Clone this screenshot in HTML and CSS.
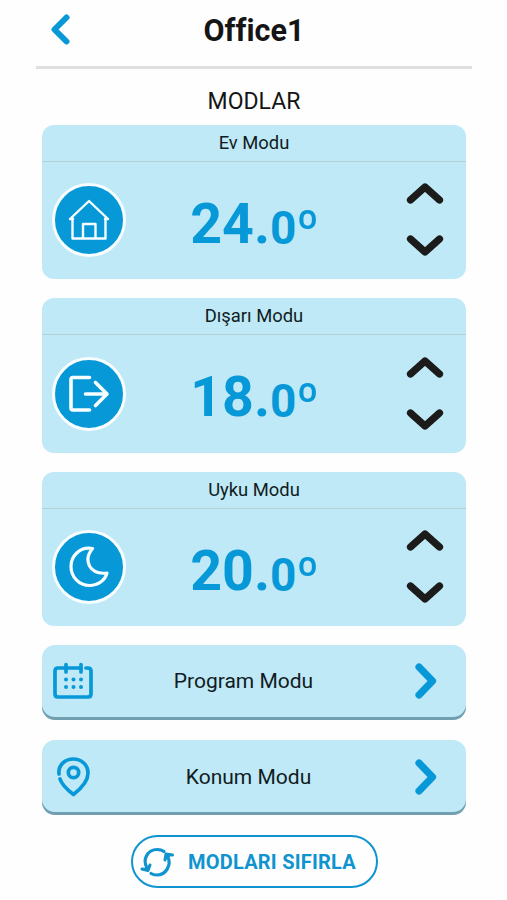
FILE: index.html
```html
<!DOCTYPE html>
<html lang="tr">
<head>
  <meta charset="UTF-8" />
  <meta name="viewport" content="width=device-width, initial-scale=1.0"/>
  <title>Office1</title>
  <link rel="stylesheet" href="styles.css">
</head>
<body>
  <div class="screen">
    <!-- Header -->
    <header class="header">
      <button class="back-btn" aria-label="Geri">
        <svg width="20" height="32" viewBox="0 0 20 32"><path d="M16.5 3.5 L4.5 15.5 L16.5 27.5"/></svg>
      </button>
      <h1>Office1</h1>
    </header>

    <h2 class="section-title">MODLAR</h2>

    <!-- Mode cards -->
    <div class="modes">
      <section class="mode-card">
        <h3>Ev Modu</h3>
        <div class="mode-body">
          <div class="mode-icon">
            <svg width="42" height="42" viewBox="0 0 42 42" stroke-width="2.4">
              <path d="M4.5 19.5 V39.5 H37.5 V19.5"/>
              <path d="M2 20 H5 M37 20 H40 M2 20 L21 2 L40 20"/>
              <path d="M15 39 V25 H27.5 V39"/>
            </svg>
          </div>
          <div class="temp"><span class="whole">24.</span><span class="decimal">0</span><span class="degree">º</span></div>
          <div class="arrows">
            <button aria-label="Artır"><svg width="38" height="24" viewBox="0 0 38 24"><path d="M4.5 18 L19 5 L33.5 18"/></svg></button>
            <button aria-label="Azalt"><svg width="38" height="24" viewBox="0 0 38 24"><path d="M4.5 5 L19 18 L33.5 5"/></svg></button>
          </div>
        </div>
      </section>

      <section class="mode-card">
        <h3>Dışarı Modu</h3>
        <div class="mode-body">
          <div class="mode-icon">
            <svg width="42" height="42" viewBox="0 0 42 42" stroke-width="3.6">
              <path d="M21.5 4.5 H5 Q3 4.5 3 6.5 V35 Q3 37 5 37 H21.5"/>
              <path d="M17.5 21 H39 M27.5 9.5 L39 21 L27.5 32.5"/>
            </svg>
          </div>
          <div class="temp"><span class="whole">18.</span><span class="decimal">0</span><span class="degree">º</span></div>
          <div class="arrows">
            <button aria-label="Artır"><svg width="38" height="24" viewBox="0 0 38 24"><path d="M4.5 18 L19 5 L33.5 18"/></svg></button>
            <button aria-label="Azalt"><svg width="38" height="24" viewBox="0 0 38 24"><path d="M4.5 5 L19 18 L33.5 5"/></svg></button>
          </div>
        </div>
      </section>

      <section class="mode-card">
        <h3>Uyku Modu</h3>
        <div class="mode-body">
          <div class="mode-icon">
            <svg width="42" height="42" viewBox="0 0 42 42" stroke-width="3.2">
              <path d="M24.5 2.5 C11 0.5 3 10.5 3 20.5 C3 31 11 39.5 21.5 39.5 C30 39.5 37 34.5 39 27 C31 28 25 26 21.5 20 C18.5 14 20 8 24.5 2.5 Z"/>
            </svg>
          </div>
          <div class="temp"><span class="whole">20.</span><span class="decimal">0</span><span class="degree">º</span></div>
          <div class="arrows">
            <button aria-label="Artır"><svg width="38" height="24" viewBox="0 0 38 24"><path d="M4.5 18 L19 5 L33.5 18"/></svg></button>
            <button aria-label="Azalt"><svg width="38" height="24" viewBox="0 0 38 24"><path d="M4.5 5 L19 18 L33.5 5"/></svg></button>
          </div>
        </div>
      </section>
    </div>

    <!-- Links -->
    <nav class="links">
      <a class="link-row program" href="#">
        <svg class="link-icon" width="40" height="40" viewBox="0 0 40 40">
          <path d="M28 7 H5 Q2 7 2 10 V33 Q2 36 5 36 H35 Q38 36 38 33 V10 Q38 7 35 7 H33"/>
          <path d="M13 3.5 V11 M28 3.5 V11"/>
          <g class="dots">
            <circle cx="13" cy="18.5" r="2"/><circle cx="20.5" cy="18.5" r="2"/><circle cx="28" cy="18.5" r="2"/>
            <circle cx="13" cy="26" r="2"/><circle cx="20.5" cy="26" r="2"/><circle cx="28" cy="26" r="2"/>
          </g>
        </svg>
        <span>Program Modu</span>
        <svg class="chevron" width="24" height="38" viewBox="0 0 24 38"><path d="M5 5 L18.5 19 L5 33"/></svg>
      </a>
      <a class="link-row location" href="#">
        <svg class="link-icon" width="40" height="40" viewBox="0 0 40 40">
          <path d="M6 17 C5 8 12 2 20.5 2 C28.5 2 35 8 35 16 C35 25 27.5 32 20.5 37.5 C14.5 33 9 28 7 22"/>
          <circle cx="20.5" cy="15.5" r="5.2"/>
        </svg>
        <span>Konum Modu</span>
        <svg class="chevron" width="24" height="38" viewBox="0 0 24 38"><path d="M5 5 L18.5 19 L5 33"/></svg>
      </a>
    </nav>

    <!-- Reset -->
    <button class="reset-btn">
      <svg width="36" height="32" viewBox="0 0 36 32">
        <path d="M7 22 C2 13 8 3.5 17 3.5 C20 3.5 22 4 24 5.5"/>
        <path d="M27.500 10 C32 19 26 29 17 29 C15 29 12.5 28.5 11 27.5"/>
        <path class="head" d="M32.5 9 L26 8 L25 14 M2 23 L8 24.500 L10 19"/>
      </svg>
      <span>MODLARI SIFIRLA</span>
    </button>
  </div>
</body>
</html>
```
FILE: styles.css
```css
/* Basic Reset */
* { margin: 0; padding: 0; box-sizing: border-box; }

body {
  font-family: Roboto, 'Liberation Sans', sans-serif;
  background: #fefefe;
  color: #101c22;
}

button {
  border: none;
  background: none;
  font-family: inherit;
  cursor: pointer;
}

svg {
  display: block;
  fill: none;
  stroke: #0798d8;
  stroke-linecap: round;
  stroke-linejoin: round;
}

.screen {
  width: 507px;
  height: 900px;
  overflow: hidden;
  padding: 0 41px 0 42px;
}

/* Header */
.header {
  display: grid;
  grid-template-columns: 40px 1fr 40px;
  align-items: center;
  height: 69px;
  margin: 0 -6px;
  padding-bottom: 5px;
  border-bottom: 3px solid #dfdfdf;
}

.back-btn { padding: 0 0 2px 14px; }
.back-btn svg { stroke-width: 6; }

.header h1 {
  font-size: 30.5px;
  font-weight: 700;
  line-height: 36px;
  text-align: center;
  color: #151515;
}

.section-title {
  margin-top: 18px;
  font-size: 23px;
  font-weight: 400;
  line-height: 30px;
  text-align: center;
  color: #151515;
}

/* Mode Cards */
.modes {
  display: flex;
  flex-direction: column;
  gap: 19px;
  margin-top: 7.5px;
}

.mode-card {
  height: 154.5px;
  background: #bfe9f7;
  border-radius: 12px;
}

.mode-card h3 {
  height: 37px;
  border-bottom: 1.5px solid #b5cfd6;
  font-size: 18.4px;
  font-weight: 400;
  line-height: 36px;
  text-align: center;
}

.mode-body {
  display: grid;
  grid-template-columns: 94px 1fr 82px;
  align-items: center;
  height: 117px;
}

.mode-icon {
  display: flex;
  align-items: center;
  justify-content: center;
  width: 74px;
  height: 74px;
  margin-left: 10px;
  border: 3px solid #f8fdff;
  border-radius: 50%;
  background: #0798d8;
}

.mode-icon svg { stroke: #f8fdff; }

/* Temperature */
.temp {
  display: flex;
  align-items: baseline;
  justify-content: center;
  padding: 11px 11px 0 0;
  color: #0798d8;
  font-weight: 700;
  line-height: 60px;
}

.whole { font-size: 55.5px; }
.decimal { font-size: 46px; transform: translateY(1px); }
.degree { font-size: 49px; font-weight: 500; transform: translateY(2px); }

.arrows {
  display: flex;
  flex-direction: column;
  gap: 28px;
}

.arrows button { width: 38px; margin-left: 22px; }
.arrows svg { stroke: #1b1b1b; stroke-width: 7.2; }

/* Link Rows */
.links {
  display: flex;
  flex-direction: column;
  gap: 20.5px;
  margin-top: 18.5px;
}

.link-row {
  display: grid;
  grid-template-columns: 60px 1fr 60px;
  align-items: center;
  height: 75px;
  padding-bottom: 2px;
  border-radius: 13px;
  background: #bfe9f7;
  box-shadow: inset 0 -3px 0 #729fb0;
  color: inherit;
  text-decoration: none;
}

.link-row span { font-size: 21px; text-align: center; }
.program span { padding-right: 21px; }
.location span { padding-right: 11px; }
.link-icon { margin-left: 11px; stroke-width: 3.7; }
.dots { fill: #0798d8; stroke: none; }
.chevron { margin-left: 8px; stroke-width: 7.2; }

/* Reset Button */
.reset-btn {
  display: flex;
  align-items: center;
  width: 247px;
  height: 53px;
  margin: 20px 0 0 89px;
  padding-left: 7px;
  border: 2.5px solid #0f94d0;
  border-radius: 27px;
  color: #0f94d0;
  font-size: 20px;
  font-weight: 700;
  letter-spacing: 0.22px;
}

.reset-btn svg { stroke: #0f94d0; stroke-width: 3.2; }
.reset-btn .head { fill: #0f94d0; stroke-width: 3; }
.reset-btn span { margin-left: 12px; white-space: nowrap; }
```
